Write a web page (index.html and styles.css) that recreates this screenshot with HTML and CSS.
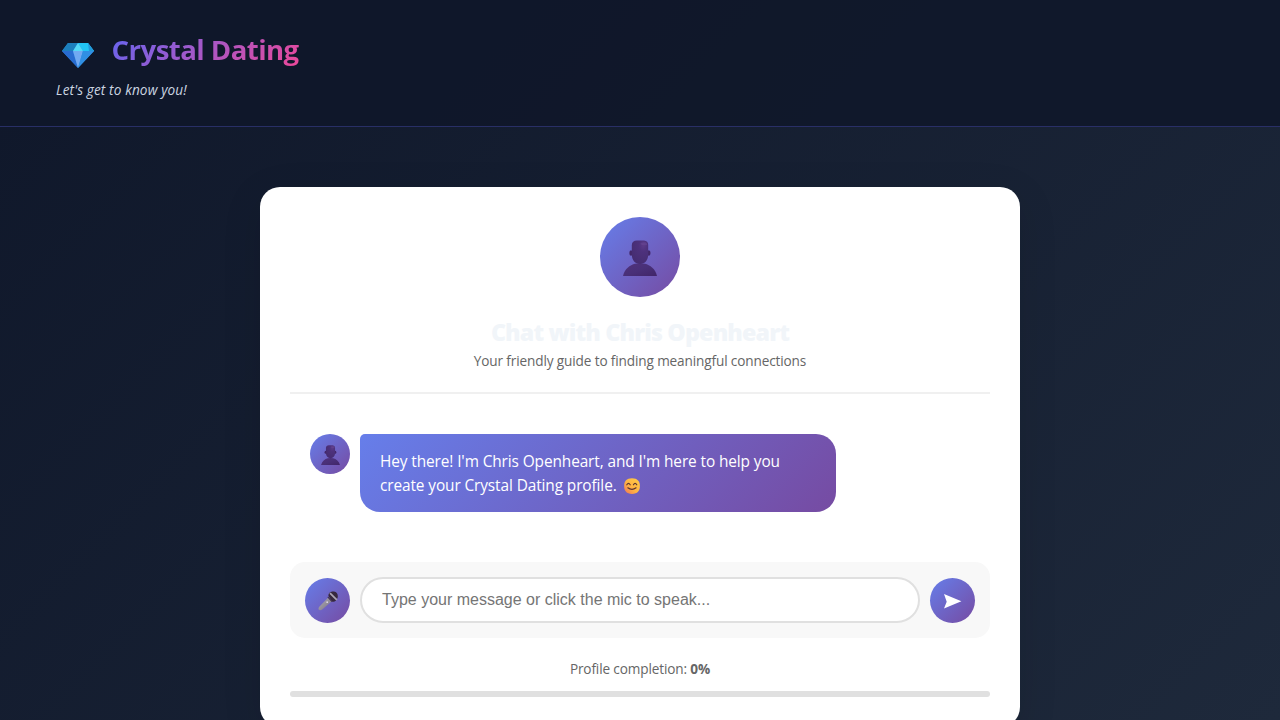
FILE: index.html
```html
<!DOCTYPE html>
<html lang="en">
<head>
<meta charset="utf-8">
<title>Crystal Dating</title>
<link rel="stylesheet" href="styles.css">
</head>
<body>
<svg class="defs" width="0" height="0" aria-hidden="true">
  <defs>
    <radialGradient id="head" cx=".7" cy=".2" r=".8"><stop offset="0" stop-color="#5c3a88"/><stop offset=".35" stop-color="#4d317c"/><stop offset="1" stop-color="#462d72"/></radialGradient>
    <linearGradient id="bust" x1="0" y1="0" x2="1" y2="1"><stop offset="0" stop-color="#50327c"/><stop offset=".5" stop-color="#493078"/><stop offset="1" stop-color="#412568"/></linearGradient>
    <linearGradient id="face" x1="1" y1="0" x2="0" y2="1"><stop offset="0" stop-color="#ffcd45"/><stop offset=".55" stop-color="#ffb443"/><stop offset="1" stop-color="#ef7558"/></linearGradient>
    <linearGradient id="handle" x1="0" y1="0" x2="1" y2="1"><stop offset="0" stop-color="#b3aeb8"/><stop offset="1" stop-color="#77717f"/></linearGradient>
    <symbol id="person" viewBox="0 0 34 36">
      <path d="M0 36C1.5 29 7 25 12 23.8Q17 22.8 22 23.8C27 25 32.5 29 34 36Z" fill="url(#bust)"/>
      <ellipse cx="8" cy="13" rx="1.7" ry="2.8" fill="#422768"/>
      <ellipse cx="25.8" cy="13" rx="1.7" ry="2.8" fill="#422768"/>
      <path d="M8.8 5Q9 .8 14 .6H21Q25.2 1 25.2 5V15C25 20 22 24 17 24S9 20 8.8 15Z" fill="url(#head)"/>
      <path d="M17 4Q18 2 23 2.4Q25 4 24 5Q20 6 17 4Z" fill="#6c4a96" opacity=".5"/>
    </symbol>
  </defs>
</svg>
<header class="header">
  <div class="brand">
    <svg class="gem" viewBox="0 0 32 26">
      <path d="M6 1H26L32 9 16 26 0 9Z" fill="#2c91df"/>
      <path d="M6 1H16L11 9H0Z" fill="#1c7fbd"/>
      <path d="M16 1H26L32 9H21Z" fill="#22c5f5"/>
      <path d="M26 1 32 9H27Z" fill="#2299d9"/>
      <path d="M16 1 21 9H11Z" fill="#55d9f6"/>
      <path d="M0 9H11L16 26Z" fill="#286bd0"/>
      <path d="M11 9H21L16 26Z" fill="#71a9f2"/>
      <path d="M21 9H32L16 26Z" fill="#308fe3"/>
    </svg>
    <h1 class="title">Crystal Dating</h1>
  </div>
  <p class="tagline">Let's get to know you!</p>
</header>
<main class="card">
  <section class="intro">
    <div class="avatar"><svg class="avatar-icon"><use href="#person"/></svg></div>
    <h2 class="heading">Chat with Chris Openheart</h2>
    <p class="subtitle">Your friendly guide to finding meaningful connections</p>
  </section>
  <section class="messages">
    <div class="avatar avatar-small"><svg class="avatar-icon"><use href="#person"/></svg></div>
    <div class="bubble">
      Hey there! I'm Chris Openheart, and I'm here to help you<br>create your Crystal Dating profile.
      <svg class="smile" viewBox="0 0 16 16">
        <path d="M8 .2C13.5 .2 15.9 3.3 15.9 8S13.5 15.9 8 15.9S.1 12.8 .1 8S2.5 .2 8 .2Z" fill="url(#face)"/>
        <path d="M2.8 6.8Q4.5 4 6.2 6.8M9.4 6.8Q11.1 4 12.8 6.8M3.8 9.8Q8 13 12.1 9.8" fill="none" stroke="#5c3432" stroke-width="1.1" stroke-linecap="round"/>
      </svg>
    </div>
  </section>
  <form class="composer">
    <button class="round" type="button" aria-label="Speak">
      <svg class="mic" viewBox="0 0 20 20">
        <path d="M10.5 6.2 14 10 4.2 18.6Q2.2 19.8 .8 18.8Q0 18 1 16Z" fill="url(#handle)"/>
        <path d="M10.5 5C10 2 13 .2 16 .5C19 .8 20.5 4 19.5 7C18.5 10 16 11.5 14 10.5Z" fill="#37283f"/>
        <path d="M12 2.2 18.8 8.8" stroke="#aaa3b4" stroke-width="1.8"/>
        <path d="M9.8 5.8 14 10.5" stroke="#43334f" stroke-width="1.2"/>
        <circle cx="9.2" cy="11.2" r=".9" fill="#ddd6e4"/>
      </svg>
    </button>
    <input class="field" type="text" placeholder="Type your message or click the mic to speak...">
    <button class="round" type="button" aria-label="Send">
      <svg class="send" viewBox="0 0 18 15"><path d="M0 0 17.4 7.3 0 14.5 2.7 7.8Z" fill="#fff"/></svg>
    </button>
  </form>
  <section class="progress">
    <p class="progress-text">Profile completion: <strong>0%</strong></p>
    <div class="track"></div>
  </section>
</main>
</body>
</html>
```
FILE: styles.css
```css
* { box-sizing: border-box; margin: 0; padding: 0; }
html { height: 100%; overflow: hidden; }
body {
  height: 100%;
  overflow: hidden;
  font-family: "Open Sans", "Noto Sans", sans-serif;
  background: linear-gradient(135deg, #0f172a 0%, #1e293b 100%);
}
.defs { position: absolute; }
.header {
  height: 127px;
  padding: 24px 56px 0;
  background: rgba(15, 23, 42, .9);
  border-bottom: 1px solid rgba(99, 102, 241, .3);
}
.brand { display: flex; align-items: center; height: 50px; padding-left: 6px; gap: 17.5px; }
.gem { width: 32px; height: 26px; margin-top: 12px; }
.title {
  font-size: 27.6px;
  line-height: 40px;
  font-weight: 700;
  letter-spacing: -.56px;
  background: linear-gradient(135deg, #6366f1, #ec4899);
  background-clip: text;
  -webkit-background-clip: text;
  color: transparent;
}
.tagline { margin-top: 6px; font-size: 13.6px; line-height: 20px; letter-spacing: .12px; font-style: italic; color: #cbd5e1; }
.card {
  width: 760px;
  height: 540px;
  margin: 60px auto 0;
  padding: 30px;
  border-radius: 20px;
  background: #fff;
  box-shadow: 0 10px 40px rgba(0, 0, 0, .1);
}
.intro {
  display: flex;
  flex-direction: column;
  align-items: center;
  height: 177px;
  border-bottom: 2px solid #f0f0f0;
}
.avatar {
  display: flex;
  flex: none;
  align-items: center;
  justify-content: center;
  width: 80px;
  height: 80px;
  border-radius: 50%;
  background: linear-gradient(135deg, #667eea, #764ba2);
}
.avatar-icon { width: 34px; height: 36px; margin-top: 2px; }
.avatar-small { width: 40px; height: 40px; }
.avatar-small .avatar-icon { width: 19px; height: 20px; }
.heading { margin-top: 18px; font-size: 23.2px; line-height: 34px; font-weight: 800; letter-spacing: -.82px; color: #f1f5f9; }
.subtitle { margin-top: 2px; font-size: 13.6px; line-height: 20px; letter-spacing: -.13px; color: #666; }
.messages { display: flex; gap: 10px; height: 168px; padding: 40px 20px 0; }
.bubble {
  width: 476px;
  height: 78px;
  padding: 16px 20px 14px;
  border-radius: 5px 20px 20px 20px;
  background: linear-gradient(135deg, #667eea, #764ba2);
  color: #fff;
  font-size: 15.4px;
  line-height: 24px;
  letter-spacing: -.1px;
  white-space: nowrap;
}
.smile { width: 16px; height: 16px; margin-left: 3px; vertical-align: -3px; }
.composer {
  display: flex;
  align-items: center;
  gap: 10px;
  height: 76px;
  padding: 15px;
  border-radius: 15px;
  background: #f8f8f8;
}
.round {
  display: flex;
  flex: none;
  align-items: center;
  justify-content: center;
  width: 45px;
  height: 45px;
  border: 0;
  border-radius: 50%;
  background: linear-gradient(135deg, #667eea, #764ba2);
}
.mic { width: 20px; height: 20px; margin-top: 2px; }
.send { width: 18px; height: 15px; margin-top: 3px; }
.field {
  flex: 1;
  height: 46px;
  padding: 0 20px;
  border: 2px solid #e0e0e0;
  border-radius: 25px;
  background: #fff;
  font: 16px "Liberation Sans", Arial, sans-serif;
}
.field::placeholder { color: #757575; }
.progress-text { margin-top: 19px; font-size: 13.6px; line-height: 23px; letter-spacing: -.13px; text-align: center; color: #666; }
.track { height: 6px; margin-top: 11px; border-radius: 3px; background: #e0e0e0; }
```
